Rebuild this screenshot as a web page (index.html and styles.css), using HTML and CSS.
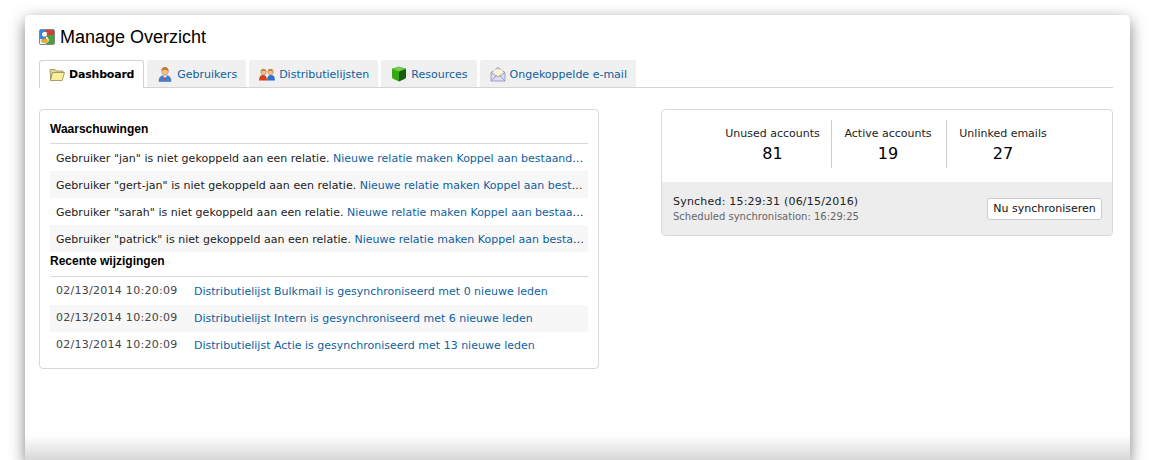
FILE: index.html
```html
<!DOCTYPE html>
<html lang="en">
<head>
    <meta charset="UTF-8">
    <title>Manage Overzicht</title>
    <link rel="stylesheet" href="styles.css">
</head>
<body>
    <div class="window">
        <h1 class="page-title">
            <svg class="logo" viewBox="0 0 16 16" width="16" height="16">
                <rect x="0.5" y="0.5" width="15" height="15" rx="1.5" fill="#dfe6ea" stroke="#7d8a8a"/>
                <rect x="1" y="1" width="6" height="9" fill="#3a86d8"/>
                <rect x="7" y="1" width="8" height="5" fill="#d23f33"/>
                <rect x="7" y="6" width="8" height="9" fill="#4f9e38"/>
                <rect x="1" y="10" width="6" height="5" fill="#eef2f4"/>
                <path d="M9.500 3H5.500C3.500 3 3 4.200 3 5.300 3 6.800 4.200 7.800 5.500 7.800 7.200 7.800 8 6.800 8 5.500 8 4.500 7.500 3.800 7 3.400z" fill="#fff"/>
                <path d="M8 8c.8.800 1.800 1.500 1.800 3 0 1.700-1.300 3-3.300 3H7V8z" fill="#fff"/>
                <rect x="2.500" y="9.800" width="6" height="3.600" rx="1.600" fill="#f2a92c" stroke="#c4801a" stroke-width="0.5"/>
            </svg>
            Manage Overzicht
        </h1>

        <ul class="tabs">
            <li class="tab active">
                <svg class="tab-icon" viewBox="0 0 16 16" width="16" height="16">
                    <path d="M1 2.500h5l1.200 1.500H14v2H3.500L1.800 13z" fill="#e6d88a" stroke="#93885a" stroke-width="0.8"/>
                    <path d="M3.600 5.500H15.500L13.200 13.500H1.400z" fill="#fbee9f" stroke="#93885a" stroke-width="0.8"/>
                </svg>
                Dashboard
            </li>
            <li class="tab">
                <svg class="tab-icon" viewBox="0 0 16 16" width="16" height="16">
                    <path d="M2 15.500c0-4 1.500-6 6-6s6 2 6 6z" fill="#3f82d2" stroke="#3465a4" stroke-width="0.5"/>
                    <path d="M6 9.500h4L8 12.500z" fill="#fff"/>
                    <path d="M7.500 11h1l.5 3-1 1-1-1z" fill="#d9482f"/>
                    <circle cx="8" cy="5.500" r="3.400" fill="#f0c08f" stroke="#b98658" stroke-width="0.5"/>
                    <path d="M4.500 5.500C4.200 2 6.500 1 8 1s3.800 1 3.500 4.500C10.500 3.500 7 4 6 4.200 5.200 4.400 4.800 4.800 4.500 5.500z" fill="#c07a2c"/>
                </svg>
                Gebruikers
            </li>
            <li class="tab">
                <svg class="tab-icon" viewBox="0 0 16 16" width="16" height="16">
                    <path d="M8 14.500c0-3.800 1.500-5.500 4-5.500s4 1.700 4 5.500z" fill="#2f6fd0"/>
                    <circle cx="11.500" cy="6" r="2.800" fill="#f0c08f" stroke="#a9763f" stroke-width="0.5"/>
                    <path d="M8.800 5.500C9 3.500 10.500 3 11.500 3s2.500.5 2.700 2.500C12.500 5 10.500 4.800 8.800 5.500z" fill="#c9862c"/>
                    <path d="M0 14.500c0-3.800 1.500-5.500 4-5.500s4 1.700 4 5.500z" fill="#d8431f"/>
                    <circle cx="4.500" cy="6" r="2.800" fill="#f0c08f" stroke="#a9763f" stroke-width="0.5"/>
                    <path d="M1.800 5.500C2 3.500 3.500 3 4.500 3s2.500.5 2.700 2.500C5.500 5 3.500 4.800 1.800 5.500z" fill="#c9862c"/>
                </svg>
                Distributielijsten
            </li>
            <li class="tab">
                <svg class="tab-icon" viewBox="0 0 16 16" width="16" height="16">
                    <path d="M1 3l7-2 7 2-7 2.500z" fill="#74d63f" stroke="#2f8f16" stroke-width="0.5"/>
                    <path d="M1 3l7 2.500V15.500L2.500 13C1.500 12.500 1 12 1 11z" fill="#35a814"/>
                    <path d="M15 3L8 5.500V15.500L13.500 13C14.500 12.500 15 12 15 11z" fill="#155f0c"/>
                </svg>
                Resources
            </li>
            <li class="tab">
                <svg class="tab-icon" viewBox="0 0 16 16" width="16" height="16">
                    <path d="M1 6.500L8 1.500l7 5V15H1z" fill="#dcdcf2" stroke="#8d8dbb" stroke-width="0.8"/>
                    <path d="M3.500 3.500h9V8.500L8 11 3.500 8.500z" fill="#fbf3cf"/>
                    <path d="M1 15l5.500-5.500M15 15L9.500 9.500M1 6.500l7 4.500 7-4.500" fill="none" stroke="#8d8dbb" stroke-width="0.8"/>
                </svg>
                Ongekoppelde e-mail
            </li>
        </ul>

        <div class="columns">
            <div class="panel panel-left">
                <h2 class="panel-heading">Waarschuwingen</h2>
                <div class="row"><span class="msg">Gebruiker "jan" is niet gekoppeld aan een relatie.</span> <a href="#">Nieuwe relatie maken</a> <a href="#">Koppel aan bestaande relatie</a></div>
                <div class="row"><span class="msg">Gebruiker "gert-jan" is niet gekoppeld aan een relatie.</span> <a href="#">Nieuwe relatie maken</a> <a href="#">Koppel aan bestaande relatie</a></div>
                <div class="row"><span class="msg">Gebruiker "sarah" is niet gekoppeld aan een relatie.</span> <a href="#">Nieuwe relatie maken</a> <a href="#">Koppel aan bestaande relatie</a></div>
                <div class="row"><span class="msg">Gebruiker "patrick" is niet gekoppeld aan een relatie.</span> <a href="#">Nieuwe relatie maken</a> <a href="#">Koppel aan bestaande relatie</a></div>

                <h2 class="panel-heading recent">Recente wijzigingen</h2>
                <div class="row change"><span class="date">02/13/2014 10:20:09</span><a href="#">Distributielijst Bulkmail is gesynchroniseerd met 0 nieuwe leden</a></div>
                <div class="row change"><span class="date">02/13/2014 10:20:09</span><a href="#">Distributielijst Intern is gesynchroniseerd met 6 nieuwe leden</a></div>
                <div class="row change"><span class="date">02/13/2014 10:20:09</span><a href="#">Distributielijst Actie is gesynchroniseerd met 13 nieuwe leden</a></div>
            </div>

            <div class="panel panel-right">
                <div class="stats">
                    <div class="stat">
                        <div class="stat-label">Unused accounts</div>
                        <div class="stat-value">81</div>
                    </div>
                    <div class="stat">
                        <div class="stat-label">Active accounts</div>
                        <div class="stat-value">19</div>
                    </div>
                    <div class="stat">
                        <div class="stat-label">Unlinked emails</div>
                        <div class="stat-value">27</div>
                    </div>
                </div>
                <div class="sync">
                    <div>
                        <div class="sync-time">Synched: 15:29:31 (06/15/2016)</div>
                        <div class="sync-next">Scheduled synchronisation: 16:29:25</div>
                    </div>
                    <button class="sync-btn">Nu synchroniseren</button>
                </div>
            </div>
        </div>
    </div>
</body>
</html>
```

FILE: styles.css
```css
*{
    box-sizing: border-box;
}
html, body{
    height: 100%;
}
body{
    margin: 0;
    padding: 15px 25px 0;
    background-color: #fff;
    overflow: hidden;
    font-family: "DejaVu Sans", sans-serif;
    font-size: 11px;
    color: #222;
}
a{
    color: #0f5f9e;
    text-decoration: none;
}
.window{
    height: 445px;
    padding: 12px 17px 0 14px;
    background: linear-gradient(to bottom, #fff 420px, #d8d8d8 445px);
    border-radius: 5px 5px 0 0;
    box-shadow: 0 5px 15px rgba(0, 0, 0, 0.5);
}
.page-title{
    display: flex;
    align-items: center;
    gap: 5px;
    margin: 0;
    height: 20px;
    font-family: "Liberation Sans", sans-serif;
    font-size: 18px;
    font-weight: 400;
    color: #000;
}
.tabs{
    display: flex;
    gap: 3px;
    list-style: none;
    margin: 13px 0 0;
    padding: 0;
    height: 28px;
    border-bottom: 1px solid #d4d4d4;
}
.tab{
    display: flex;
    align-items: center;
    gap: 4px;
    height: 27px;
    padding: 1px 9px 0 10px;
    background-color: #f0f0f0;
    border-radius: 3px 3px 0 0;
    color: #0f5f9e;
}
.tab.active{
    height: 28px;
    padding: 0 9px;
    background-color: #fff;
    border: 1px solid #d4d4d4;
    border-bottom: none;
    font-weight: 700;
    letter-spacing: -0.2px;
    color: #000;
}
.columns{
    display: flex;
    justify-content: space-between;
    align-items: flex-start;
    margin-top: 21px;
}
.panel{
    background-color: #fff;
    border: 1px solid #d8d8d8;
    border-radius: 4px;
}
.panel-left{
    width: 560px;
    height: 260px;
    padding: 10px 10px 0;
}
.panel-right{
    width: 452px;
    overflow: hidden;
}
.panel-heading{
    margin: 0;
    height: 24px;
    border-bottom: 1px solid #d8d8d8;
    font-family: "Liberation Sans", sans-serif;
    font-size: 12px;
    line-height: 18px;
    color: #000;
}
.panel-heading.recent{
    height: 25px;
    margin-bottom: 1px;
}
.row{
    height: 27px;
    line-height: 27px;
    padding: 1px 3px 0 6px;
    white-space: nowrap;
    overflow: hidden;
    text-overflow: ellipsis;
    color: #222;
}
.row:nth-of-type(even){
    background-color: #f7f7f7;
}
.msg{
    letter-spacing: 0.03px;
}
.change{
    display: flex;
    padding-top: 0;
    line-height: 26px;
}
.change a{
    padding-top: 1px;
}
.date{
    width: 138px;
    flex-shrink: 0;
    letter-spacing: 0.27px;
    color: #444;
}
.stats{
    display: flex;
    justify-content: center;
    height: 72px;
    padding: 10px 0 0 3px;
}
.stat{
    width: 115px;
    height: 48px;
    padding: 7px 2px 0 0;
    text-align: center;
    border-left: 1px solid #ccc;
}
.stat:first-child{
    border-left: none;
}
.stat-value{
    margin-top: 4px;
    font-size: 16px;
    color: #000;
}
.sync{
    display: flex;
    justify-content: space-between;
    align-items: center;
    height: 53px;
    padding: 0 10px 0 11px;
    background-color: #ededed;
}
.sync-time{
    letter-spacing: 0.2px;
}
.sync-next{
    margin-top: 3px;
    font-size: 10px;
    color: #666;
}
.sync-btn{
    width: 115px;
    height: 22px;
    padding: 0;
    background-color: #fff;
    border: 1px solid #ccc;
    border-radius: 3px;
    font-family: inherit;
    font-size: 11px;
    color: #111;
}
```
